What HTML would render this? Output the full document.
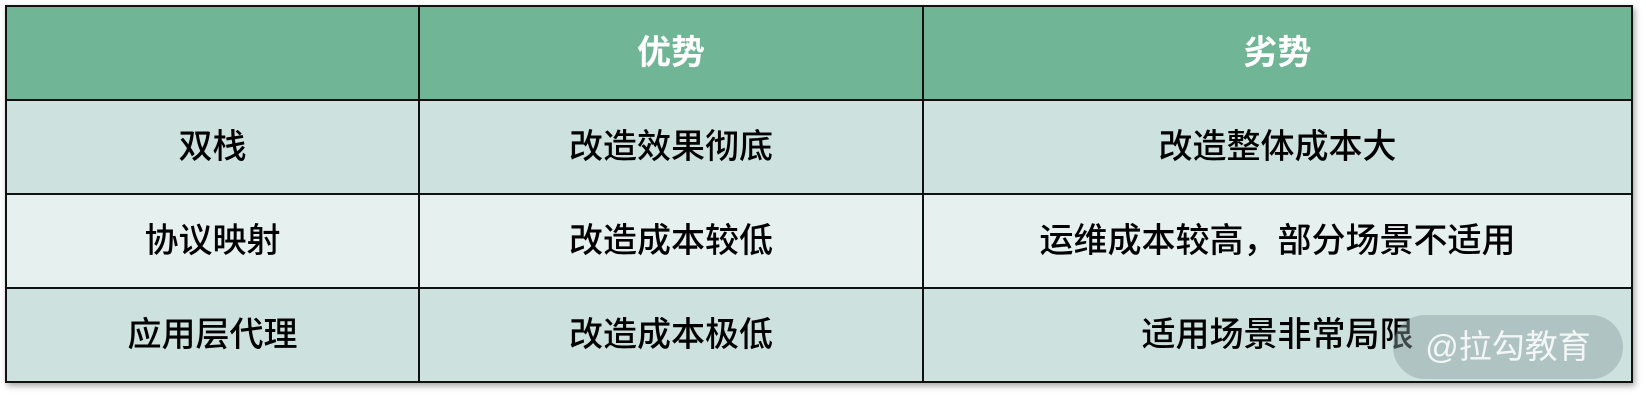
<!DOCTYPE html>
<html><head><meta charset="utf-8"><style>
body{margin:0;width:1646px;height:401px;background:#fff;position:relative;overflow:hidden;font-family:"Liberation Sans","Noto Sans CJK SC",sans-serif;}
table{position:absolute;left:5px;top:5px;border-collapse:collapse;box-shadow:2px 3px 6px rgba(0,0,0,0.35);}
td{border:2px solid #111;text-align:center;font-size:34px;font-weight:500;color:#000;padding:0;height:92px;line-height:40px;}
tr.h td{background:#70b595;color:#fff;font-weight:bold;}
tr.a td{background:#cde2df;}
tr.b td{background:#e6f0ee;}
.wm{position:absolute;left:1393px;top:315px;width:230px;height:64px;border-radius:32px;background:rgba(140,160,160,0.45);color:rgba(255,255,255,0.85);font-size:33px;line-height:64px;text-align:center;}
</style></head><body>
<table>
<colgroup><col style="width:413px"><col style="width:504px"><col style="width:709px"></colgroup>
<tr class="h"><td></td><td>优势</td><td>劣势</td></tr>
<tr class="a"><td>双栈</td><td>改造效果彻底</td><td>改造整体成本大</td></tr>
<tr class="b"><td>协议映射</td><td>改造成本较低</td><td>运维成本较高，部分场景不适用</td></tr>
<tr class="a"><td>应用层代理</td><td>改造成本极低</td><td>适用场景非常局限</td></tr>
</table>
<div class="wm">@拉勾教育</div>
</body></html>
